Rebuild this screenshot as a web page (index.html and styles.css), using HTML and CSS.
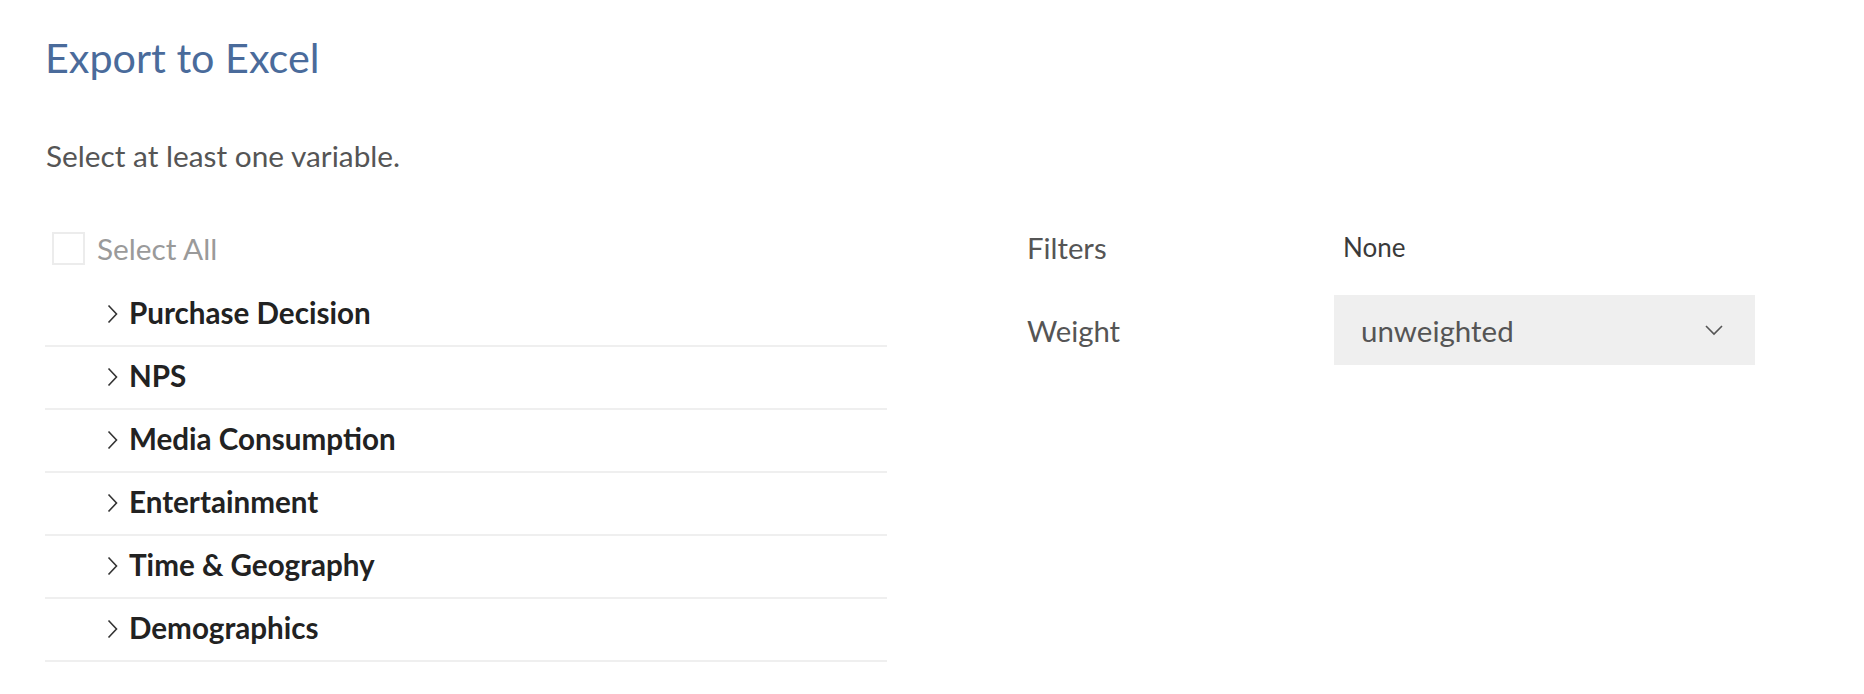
FILE: index.html
```html
<!DOCTYPE html>
<html lang="en">
<head>
<meta charset="utf-8">
<title>Export to Excel</title>
<link rel="stylesheet" href="styles.css">
</head>
<body>
<div class="page">
  <h1 class="title">Export to Excel</h1>
  <p class="hint">Select at least one variable.</p>
  <div class="content">
    <div class="vars">
      <label class="select-all"><span class="checkbox"></span><span class="select-all-text">Select All</span></label>
      <ul class="groups">
        <li class="group"><svg class="chev" width="11" height="20" viewBox="0 0 11 20"><path d="M1.5 1.5 L9.5 10 L1.5 18.5"/></svg><span>Purchase Decision</span></li>
        <li class="group"><svg class="chev" width="11" height="20" viewBox="0 0 11 20"><path d="M1.5 1.5 L9.5 10 L1.5 18.5"/></svg><span>NPS</span></li>
        <li class="group"><svg class="chev" width="11" height="20" viewBox="0 0 11 20"><path d="M1.5 1.5 L9.5 10 L1.5 18.5"/></svg><span>Media Consumption</span></li>
        <li class="group"><svg class="chev" width="11" height="20" viewBox="0 0 11 20"><path d="M1.5 1.5 L9.5 10 L1.5 18.5"/></svg><span>Entertainment</span></li>
        <li class="group"><svg class="chev" width="11" height="20" viewBox="0 0 11 20"><path d="M1.5 1.5 L9.5 10 L1.5 18.5"/></svg><span>Time &amp; Geography</span></li>
        <li class="group"><svg class="chev" width="11" height="20" viewBox="0 0 11 20"><path d="M1.5 1.5 L9.5 10 L1.5 18.5"/></svg><span>Demographics</span></li>
      </ul>
    </div>
    <div class="options">
      <div class="opt-label">Filters</div>
      <div class="opt-value">None</div>
      <div class="opt-label">Weight</div>
      <div class="select"><span>unweighted</span><svg class="select-chev" width="18" height="11" viewBox="0 0 18 11"><path d="M1 1 L9 9 L17 1"/></svg></div>
    </div>
  </div>
</div>
</body>
</html>
```

FILE: styles.css
```css
* { box-sizing: border-box; }
html, body { margin: 0; padding: 0; background: #ffffff; }
body { font-family: "Lato", "Liberation Sans", Arial, sans-serif; color: #555; }

.page { padding: 0 0 0 45px; }

.title {
  margin: 33px 0 0 0;
  font-size: 41.3px;
  line-height: 48px;
  font-weight: 400;
  color: #4a6b9b;
}

.hint {
  margin: 57px 0 0 1px;
  font-size: 29.8px;
  line-height: 36px;
  color: #555;
}

.content {
  margin-top: 56px;
  display: flex;
  align-items: flex-start;
}

.vars { width: 842px; }

.select-all {
  display: flex;
  align-items: center;
  height: 36px;
  padding-left: 7px;
  margin-bottom: 18px;
}
.checkbox {
  width: 33px;
  height: 33px;
  border: 2px solid #ececec;
  margin-right: 12px;
}
.select-all-text { font-size: 29.8px; color: #9a9a9a; }

.groups { list-style: none; margin: 0; padding: 0; }
.group {
  display: flex;
  align-items: center;
  height: 63px;
  padding-left: 62px;
  padding-bottom: 4px;
  border-bottom: 2px solid #efefef;
  font-size: 29.6px;
  font-weight: 700;
  color: #222;
}
.chev { margin-right: 11px; flex: none; margin-top: 2px; }
.chev path { fill: none; stroke: #333; stroke-width: 1.6; }

.options {
  margin-left: 140px;
  display: grid;
  grid-template-columns: 307px 421px;
  grid-template-rows: 34px 70px;
  row-gap: 31px;
  align-items: center;
}
.opt-label { font-size: 29.3px; color: #555; }
.opt-value { font-size: 26px; color: #3a3a3a; padding-left: 9px; }

.select {
  height: 70px;
  background: #efefef;
  display: flex;
  align-items: center;
  justify-content: space-between;
  padding: 0 32px 0 27px;
  font-size: 29.5px;
  color: #555;
}
.select-chev path { fill: none; stroke: #555; stroke-width: 1.6; }
```
